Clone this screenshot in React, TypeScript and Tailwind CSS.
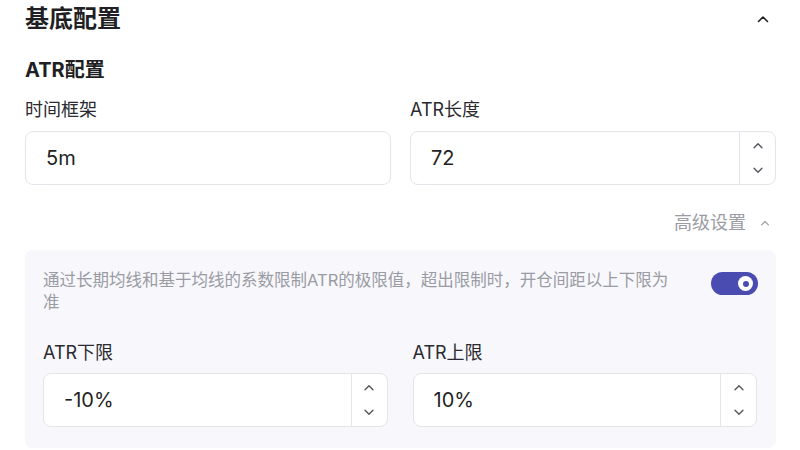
import { useState } from "react";

const font = { fontFamily: 'Inter, "Noto Sans CJK SC", sans-serif' };

function Chevron({ up, className }: { up?: boolean; className?: string }) {
  return (
    <svg viewBox="0 0 12 8" className={className} fill="none" stroke="currentColor" strokeWidth="1.6" strokeLinecap="round" strokeLinejoin="round">
      {up ? <path d="M1.5 6.5 6 2l4.5 4.5" /> : <path d="M1.5 1.5 6 6l4.5-4.5" />}
    </svg>
  );
}

function TextBox({ value }: { value: string }) {
  return (
    <div className="flex h-[54px] items-center rounded-lg border border-[#e3e5ea] bg-white pl-5 text-[20px] text-[#1f1f24]">
      {value}
    </div>
  );
}

function NumberBox({ value }: { value: string }) {
  return (
    <div className="flex h-[54px] rounded-lg border border-[#e3e5ea] bg-white">
      <div className="flex flex-1 items-center pl-5 text-[20px] text-[#1f1f24]">{value}</div>
      <div className="flex w-[36px] flex-col items-center justify-center gap-[18px] border-l border-[#e3e5ea] text-[#55565c]">
        <Chevron up className="h-[7px] w-[12px]" />
        <Chevron className="h-[7px] w-[12px]" />
      </div>
    </div>
  );
}

export default function App() {
  const [on, setOn] = useState(true);

  return (
    <div className="h-[450px] w-[800px] overflow-hidden bg-white pl-[25px] pr-[24px] pt-[3px]" style={font}>
      <div className="flex h-[32px] items-center justify-between">
        <span className="text-[24px] font-semibold leading-[32px] text-[#1f1f24]">基底配置</span>
        <Chevron up className="mr-[7px] h-[8px] w-[12px] text-[#1f1f24]" />
      </div>

      <div className="mt-[22px] text-[20px] font-bold leading-[26px] text-[#1f1f24]">ATR配置</div>

      <div className="mt-[15px] grid grid-cols-2 gap-[19px]">
        <div>
          <div className="mb-[9px] text-[18px] leading-[24px] text-[#2a2a30]">时间框架</div>
          <TextBox value="5m" />
        </div>
        <div>
          <div className="mb-[9px] text-[18px] leading-[24px] text-[#2a2a30]">ATR长度</div>
          <NumberBox value="72" />
        </div>
      </div>

      <div className="mt-[27px] flex items-center justify-end gap-[14px] pr-[6px] text-[18px] leading-[22px] text-[#9a9ba3]">
        <span>高级设置</span>
        <Chevron up className="h-[6px] w-[10px]" />
      </div>

      <div className="mt-[16px] rounded-lg bg-[#f7f7fc] pb-[21px] pl-[18px] pr-[19px] pt-[19px]">
        <div className="flex items-start justify-between gap-6">
          <p className="max-w-[632px] text-[16.5px] leading-[22px] text-[#9a9ba3]">
            通过长期均线和基于均线的系数限制ATR的极限值，超出限制时，开仓间距以上下限为准
          </p>
          <button
            onClick={() => setOn(!on)}
            className={`mr-[-1px] mt-[3px] flex h-[23px] w-[47px] shrink-0 items-center rounded-full px-[5px] ${on ? "justify-end bg-[#4b4cb2]" : "justify-start bg-gray-300"}`}
          >
            <span className="flex h-[15px] w-[15px] items-center justify-center rounded-full bg-white">
              <span className="h-[6px] w-[6px] rounded-full bg-[#4b4cb2]" />
            </span>
          </button>
        </div>

        <div className="mt-[28px] grid grid-cols-2 gap-[25px]">
          <div>
            <div className="mb-[8px] text-[18px] leading-[24px] text-[#2a2a30]">ATR下限</div>
            <NumberBox value="-10%" />
          </div>
          <div>
            <div className="mb-[8px] text-[18px] leading-[24px] text-[#2a2a30]">ATR上限</div>
            <NumberBox value="10%" />
          </div>
        </div>
      </div>
    </div>
  );
}
